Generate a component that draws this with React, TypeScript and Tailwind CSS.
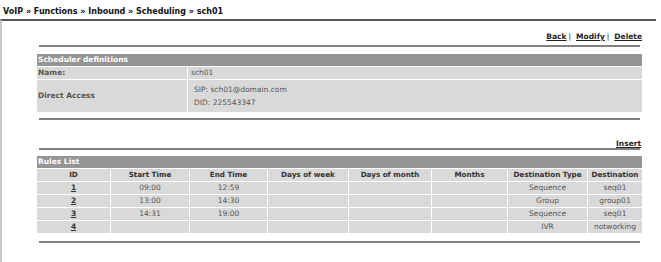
const RULES = [
  { id: '1', start: '09:00', end: '12:59', type: 'Sequence', dest: 'seq01' },
  { id: '2', start: '13:00', end: '14:30', type: 'Group', dest: 'group01' },
  { id: '3', start: '14:31', end: '19:00', type: 'Sequence', dest: 'seq01' },
  { id: '4', start: '', end: '', type: 'IVR', dest: 'notworking' },
];

const COLS = 'grid grid-cols-[73px_78px_77px_80px_82px_75px_79px_54px] gap-x-px';

function Rule() {
  return <div className="mx-[2px] border-t-2 border-[#808080]" />;
}

export default function App() {
  return (
    <div className="w-[661px] h-[262px] bg-white text-[7.5px] text-[#555] font-['DejaVu_Sans',Verdana,sans-serif] overflow-hidden">
      <div className="h-[19px] pl-[3px] pt-[8px] font-bold text-[8px] text-[#111] leading-[8px]">
        VoIP » Functions » Inbound » Scheduling » sch01
      </div>
      <div className="w-[656px] h-[243px] border-l-2 border-t-2 border-l-[#c8c8c8] border-t-[#555] pl-[35px] pr-[14px]">
        <div className="h-[24px] pt-[8px] flex justify-end items-center leading-[10px] text-[#222]">
          <a className="font-bold underline">Back</a>
          <span className="ml-[2px] mr-[5px]">|</span>
          <a className="font-bold underline">Modify</a>
          <span className="ml-[2px] mr-[5px]">|</span>
          <a className="font-bold underline">Delete</a>
        </div>
        <Rule />
        <div className="mt-[7px] flex flex-col gap-px">
          <div className="h-[12px] bg-[#959595] text-white font-bold px-[1px] flex items-center">
            Scheduler definitions
          </div>
          <div className="grid grid-cols-[150px_1fr] gap-x-px">
            <div className="h-[12px] bg-[#d9d9d9] font-bold px-[1px] flex items-center">Name:</div>
            <div className="h-[12px] bg-[#d9d9d9] px-[3px] flex items-center">sch01</div>
          </div>
          <div className="grid grid-cols-[150px_1fr] gap-x-px">
            <div className="h-[32px] bg-[#d9d9d9] font-bold px-[1px] flex items-center">Direct Access</div>
            <div className="h-[32px] bg-[#d9d9d9] px-[6px] flex flex-col justify-center gap-[4px] leading-[9px]">
              <div>SIP: sch01@domain.com</div>
              <div>DID: 225543347</div>
            </div>
          </div>
        </div>
        <div className="mt-[6px]">
          <Rule />
        </div>
        <div className="h-[28px] flex justify-end items-end leading-[9px] text-[#222]">
          <a className="font-bold underline mr-[1px]">Insert</a>
        </div>
        <Rule />
        <div className="mt-[6px] flex flex-col gap-px">
          <div className="h-[12px] bg-[#959595] text-white font-bold px-[1px] flex items-center">
            Rules List
          </div>
          <div className={COLS}>
            {['ID', 'Start Time', 'End Time', 'Days of week', 'Days of month', 'Months', 'Destination Type', 'Destination'].map((h) => (
              <div key={h} className="h-[12px] bg-[#d9d9d9] font-bold text-[7.2px] text-[#333] flex items-center justify-center whitespace-nowrap">
                {h}
              </div>
            ))}
          </div>
          {RULES.map((r) => (
            <div key={r.id} className={COLS}>
              <div className="h-[12px] bg-[#d9d9d9] flex items-center justify-center">
                <a className="font-bold underline text-[#333]">{r.id}</a>
              </div>
              <div className="h-[12px] bg-[#d9d9d9] flex items-center justify-center">{r.start}</div>
              <div className="h-[12px] bg-[#d9d9d9] flex items-center justify-center">{r.end}</div>
              <div className="h-[12px] bg-[#d9d9d9]" />
              <div className="h-[12px] bg-[#d9d9d9]" />
              <div className="h-[12px] bg-[#d9d9d9]" />
              <div className="h-[12px] bg-[#d9d9d9] flex items-center justify-center">{r.type}</div>
              <div className="h-[12px] bg-[#d9d9d9] flex items-center justify-center">{r.dest}</div>
            </div>
          ))}
        </div>
        <div className="mt-[8px]">
          <Rule />
        </div>
      </div>
    </div>
  );
}
